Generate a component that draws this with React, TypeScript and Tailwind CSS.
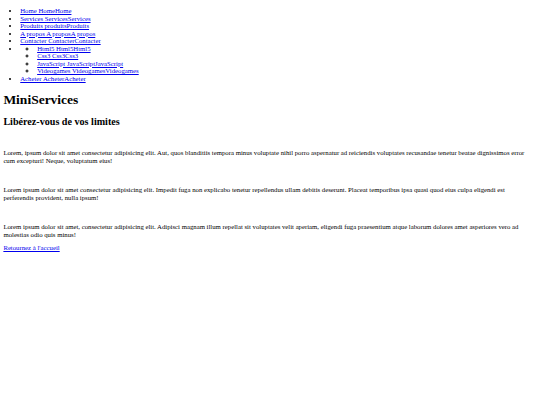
import React from "react";

const links = [
  "Home HomeHome",
  "Services ServicesServices",
  "Produits produitsProduits",
  "A propos A proposA propos",
  "Contacter ContacterContacter",
];
const sub = [
  "Html5 Html5Html5",
  "Css3 Css3Css3",
  "JavaScript JavaScriptJavaScript",
  "Videogames VideogamesVideogames",
];

const A = ({ children }: { children: React.ReactNode }) => (
  <a href="#" className="text-[#0000ee] underline">
    {children}
  </a>
);

export default function App() {
  return (
    <div className="min-h-[405px] bg-white px-[3.375px] pt-[7.1px] text-black font-['Liberation_Serif','Times_New_Roman',serif] text-[6.75px] leading-[7.55px]">
      <ul className="list-disc pl-[16.875px]">
        {links.map((l) => (
          <li key={l}>
            <A>{l}</A>
          </li>
        ))}
        <li>
          <ul className="list-[circle] pl-[16.875px]">
            {sub.map((l) => (
              <li key={l}>
                <A>{l}</A>
              </li>
            ))}
          </ul>
        </li>
        <li>
          <A>Acheter AcheterAcheter</A>
        </li>
      </ul>
      <h1 className="mt-[9.2px] text-[13.5px] leading-[15.1px] font-bold">MiniServices</h1>
      <h2 className="mt-[9.2px] text-[10.125px] leading-[11.3px] font-bold">Libérez-vous de vos limites</h2>
      <p className="mt-[21.7px]">
        Lorem, ipsum dolor sit amet consectetur adipisicing elit. Aut, quos blanditiis tempora minus voluptate nihil porro aspernatur ad reiciendis voluptates recusandae tenetur beatae dignissimos error cum excepturi! Neque, voluptatum eius!
      </p>
      <p className="mt-[21.9px]">
        Lorem ipsum dolor sit amet consectetur adipisicing elit. Impedit fuga non explicabo tenetur repellendus ullam debitis deserunt. Placeat temporibus ipsa quasi quod eius culpa eligendi est perferendis provident, nulla ipsum!
      </p>
      <p className="mt-[21.9px]">
        Lorem ipsum dolor sit amet, consectetur adipisicing elit. Adipisci magnam illum repellat sit voluptates velit aperiam, eligendi fuga praesentium atque laborum dolores amet asperiores vero ad molestias odio quis minus!
      </p>
      <p className="mt-[6px]">
        <A>Retournez à l'accueil</A>
      </p>
    </div>
  );
}
